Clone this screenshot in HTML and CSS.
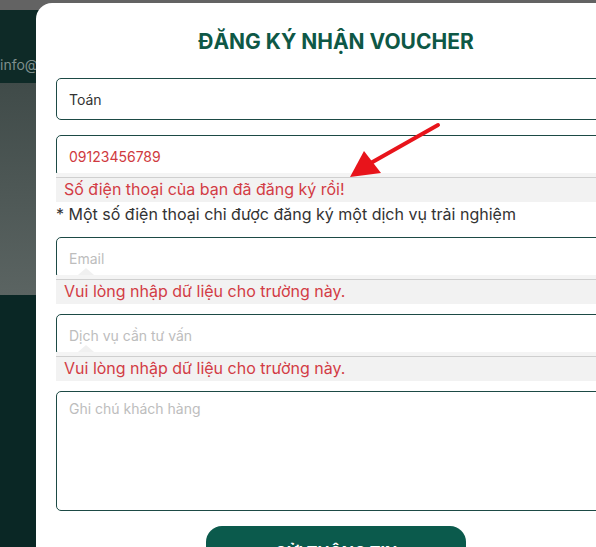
FILE: index.html
```html
<!DOCTYPE html>
<html lang="vi">
<head>
  <meta charset="UTF-8">
  <meta name="viewport" content="width=device-width, initial-scale=1.0">
  <title>Đăng ký nhận voucher</title>
  <link rel="stylesheet" href="styles.css">
</head>
<body>
  <div id="page">
    <div class="topbar"></div>
    <div class="header"><span class="mail">info@spa.vn</span></div>
    <div class="hero"></div>
    <div class="rest"></div>
  </div>

  <div id="modal">
    <h1 class="title">ĐĂNG KÝ NHẬN VOUCHER</h1>
    <form class="form">
      <input class="field" type="text" value="Toán">

      <div class="group">
        <input class="field phone" type="text" value="09123456789">
        <div class="err">Số điện thoại của bạn đã đăng ký rồi!</div>
      </div>
      <p class="note">* Một số điện thoại chỉ được đăng ký một dịch vụ trải nghiệm</p>

      <div class="group">
        <input class="field" type="text" placeholder="Email">
        <div class="err tip">Vui lòng nhập dữ liệu cho trường này.</div>
      </div>

      <div class="group">
        <input class="field" type="text" placeholder="Dịch vụ cần tư vấn">
        <div class="err tip">Vui lòng nhập dữ liệu cho trường này.</div>
      </div>

      <textarea class="field notes" placeholder="Ghi chú khách hàng"></textarea>

      <button class="send" type="button">GỬI THÔNG TIN</button>
    </form>
  </div>

  <svg class="arrow" width="596" height="547" viewBox="0 0 596 547">
    <line x1="438" y1="125" x2="369" y2="164" stroke="#e8141b" stroke-width="4" stroke-linecap="round"/>
    <polygon points="350,177 364,151 381,173" fill="#e8141b"/>
  </svg>
</body>
</html>
```

FILE: styles.css
```css
body {
  margin: 0;
  background: #0a2725;
  font-family: Inter, 'Noto Sans', sans-serif;
  overflow: hidden;
  height: 547px;
}
#page {
  height: 547px;
}
.topbar {
  height: 10px;
  background: #636363;
}
.header {
  height: 73px;
  box-sizing: border-box;
  background: #0e2a27;
  padding-top: 44px;
  white-space: nowrap;
  overflow: hidden;
}
.mail {
  color: #7f8f8d;
  font-size: 14px;
  line-height: 18px;
}
.hero {
  height: 212px;
  background: linear-gradient(#404b49, #5b6462);
}
.rest {
  height: 252px;
  background: #0a2725;
}
#modal {
  position: absolute;
  top: 3px;
  left: 36px;
  width: 600px;
  height: 580px;
  background: #fff;
  border-radius: 16px 0 0 0;
  padding: 26px 20px 0 20px;
  box-sizing: border-box;
}
.title {
  margin: 0 0 23px 0;
  text-align: center;
  font-size: 21px;
  line-height: 26px;
  font-weight: 700;
  color: #0e5846;
}
.form {
  display: flex;
  flex-direction: column;
}
.field {
  display: block;
  width: 100%;
  height: 42px;
  box-sizing: border-box;
  border: 1px solid #1d4a45;
  border-radius: 5px;
  padding: 0 12px;
  font-family: inherit;
  font-size: 14px;
  color: #333;
  background: #fff;
  outline: none;
}
.field::placeholder {
  color: #bdbdbd;
}
.phone {
  color: #cf3a40;
}
.form > .field:first-child {
  margin-bottom: 15px;
}
.group {
  display: flex;
  flex-direction: column;
  margin-bottom: 10px;
}
.err {
  position: relative;
  margin-top: -4px;
  height: 29px;
  box-sizing: border-box;
  padding: 4px 8px 0;
  line-height: 25px;
  font-size: 16px;
  color: #d23c45;
  background: linear-gradient(#f4f4f4 0 4px, #cfcfcf 4px 5px, #f2f2f2 5px);
}
.tip::before {
  content: '';
  position: absolute;
  left: 22px;
  top: -7px;
  border: 8px solid transparent;
  border-top: 0;
  border-bottom: 7px solid #f0f0f0;
}
.note {
  margin: -10px 0 11px 0;
  font-size: 16px;
  line-height: 24px;
  color: #333;
}
.notes {
  height: 120px;
  padding-top: 8px;
  resize: none;
}
.send {
  align-self: center;
  margin-top: 15px;
  width: 260px;
  height: 50px;
  border: none;
  border-radius: 16px;
  background: #0b5a4c;
  color: #fff;
  font-family: inherit;
  font-size: 16px;
  font-weight: 700;
  padding-top: 2px;
  cursor: pointer;
}
.arrow {
  position: absolute;
  top: 0;
  left: 0;
  pointer-events: none;
}
```
